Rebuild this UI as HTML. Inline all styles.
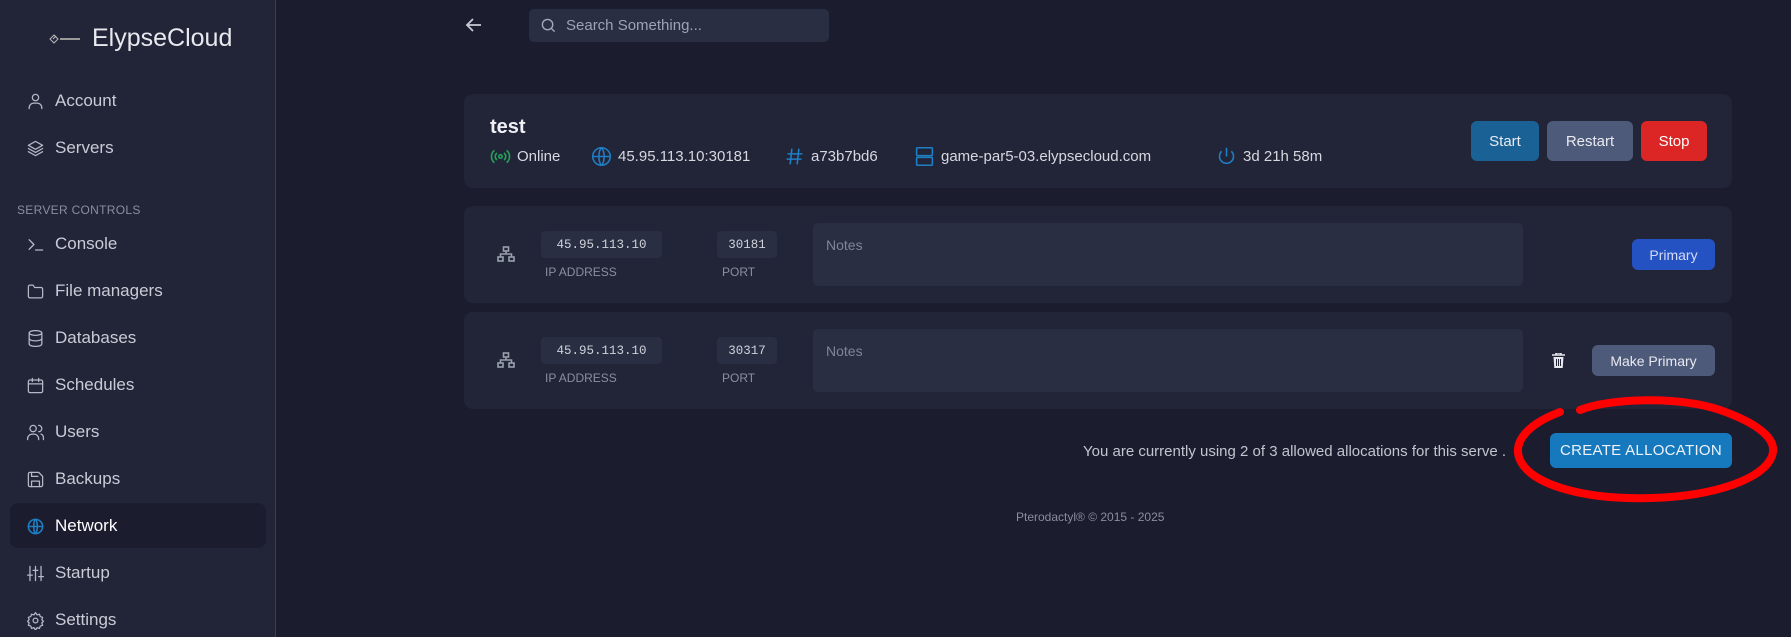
<!DOCTYPE html>
<html><head><meta charset="utf-8"><style>
*{box-sizing:border-box;margin:0;padding:0}
body{width:1791px;height:637px;overflow:hidden;background:#1b1c2e;font-family:"Liberation Sans",sans-serif;color:#e5e7eb;position:relative}
.side{position:absolute;left:0;top:0;width:276px;height:637px;background:#222438;border-right:1px solid #3a3d55}
.logo{position:absolute;left:48px;top:24px;font-size:25px;color:#e8e9ee;display:flex;align-items:center;gap:10px}
.nav{position:absolute;left:26px;font-size:17px;color:#c9ccd6;display:flex;align-items:center;gap:10px;height:24px}
.nav svg{width:19px;height:19px;fill:none;stroke:#b5b9c6;stroke-width:1.6;stroke-linecap:round;stroke-linejoin:round}
.sec{position:absolute;left:17px;top:203px;font-size:12px;color:#8a8ea0;letter-spacing:.3px}
.hl{position:absolute;left:10px;top:503px;width:256px;height:45px;background:#1b1c2e;border-radius:8px}
.card{position:absolute;left:464px;width:1268px;background:#222438;border-radius:9px}
.btn{position:absolute;border-radius:6px;color:#e8eaf0;font-size:15px;display:flex;align-items:center;justify-content:center}
.info{position:absolute;top:146px;font-size:15px;color:#d6d8e0;display:flex;align-items:center;gap:6px}
.info svg{width:21px;height:21px;fill:none;stroke:#1e7fc4;stroke-width:1.8}
.mono{position:absolute;background:#2a2e42;border-radius:4px;font-family:"Liberation Mono",monospace;font-size:12.5px;color:#cfd2da;display:flex;align-items:center;justify-content:center;height:27px}
.lbl{position:absolute;font-size:12px;color:#8a8ea0}
.notes{position:absolute;left:349px;width:710px;height:63px;background:#2a2e42;border-radius:5px;color:#7f8496;font-size:14px;padding:14px 13px}
</style></head><body>
<div class="side">
 <div class="logo"><svg width="34" height="12" viewBox="0 0 34 12"><g stroke="#bbb" fill="none" stroke-width="1"><path d="M2 6l4-4 4 4-4 4z"/><path d="M5 6l3-3"/></g><rect x="12" y="5" width="20" height="2" fill="#999"/></svg>ElypseCloud</div>
 <div class="nav" style="top:89px"><svg viewBox="0 0 24 24"><circle cx="12" cy="7" r="4"/><path d="M4 21v-1a6 6 0 0 1 6-6h4a6 6 0 0 1 6 6v1"/></svg>Account</div>
 <div class="nav" style="top:136px"><svg viewBox="0 0 24 24"><path d="M12 3l9 5-9 5-9-5z"/><path d="M3 12l9 5 9-5"/><path d="M3 16l9 5 9-5"/></svg>Servers</div>
 <div class="sec">SERVER CONTROLS</div>
 <div class="nav" style="top:232px"><svg viewBox="0 0 24 24"><path d="M4 6l6 6-6 6"/><path d="M12 19h9"/></svg>Console</div>
 <div class="nav" style="top:279px"><svg viewBox="0 0 24 24"><path d="M3 6a2 2 0 0 1 2-2h4l2 3h8a2 2 0 0 1 2 2v9a2 2 0 0 1-2 2H5a2 2 0 0 1-2-2z"/></svg>File managers</div>
 <div class="nav" style="top:326px"><svg viewBox="0 0 24 24"><ellipse cx="12" cy="5" rx="8" ry="3"/><path d="M4 5v14c0 1.7 3.6 3 8 3s8-1.3 8-3V5"/><path d="M4 12c0 1.7 3.6 3 8 3s8-1.3 8-3"/></svg>Databases</div>
 <div class="nav" style="top:373px"><svg viewBox="0 0 24 24"><rect x="3" y="5" width="18" height="16" rx="2"/><path d="M8 3v4M16 3v4M3 10h18"/></svg>Schedules</div>
 <div class="nav" style="top:420px"><svg viewBox="0 0 24 24"><circle cx="9" cy="7" r="4"/><path d="M2 21v-1a6 6 0 0 1 6-6h2a6 6 0 0 1 6 6v1"/><path d="M16 3a4 4 0 0 1 0 8M19 14a5 5 0 0 1 3 5v2"/></svg>Users</div>
 <div class="nav" style="top:467px"><svg viewBox="0 0 24 24"><path d="M5 3h11l5 5v11a2 2 0 0 1-2 2H5a2 2 0 0 1-2-2V5a2 2 0 0 1 2-2z"/><path d="M7 21v-7h10v7M7 3v5h8"/></svg>Backups</div>
 <div class="hl"></div>
 <div class="nav" style="top:514px;color:#fff"><svg viewBox="0 0 24 24" style="stroke:#1e7fc4;stroke-width:2"><circle cx="12" cy="12" r="9"/><path d="M3 12h18M12 3c3 3 3 15 0 18M12 3c-3 3-3 15 0 18"/></svg>Network</div>
 <div class="nav" style="top:561px"><svg viewBox="0 0 24 24"><path d="M5 3v18M12 3v18M19 3v18M2 14h6M9 8h6M16 16h6"/></svg>Startup</div>
 <div class="nav" style="top:608px"><svg viewBox="0 0 24 24"><circle cx="12" cy="12" r="3"/><path d="M12 2l2 3 3-1 1 3 3 1-1 3 2 2-2 2 1 3-3 1-1 3-3-1-2 3-2-3-3 1-1-3-3-1 1-3-2-2 2-2-1-3 3-1 1-3 3 1z"/></svg>Settings</div>
</div>

<svg style="position:absolute;left:465px;top:17px" width="18" height="16" viewBox="0 0 18 16"><path d="M16 8H2M8 2L2 8l6 6" stroke="#c8cbd6" stroke-width="1.8" fill="none"/></svg>
<div style="position:absolute;left:529px;top:9px;width:300px;height:33px;background:#2a2e42;border-radius:5px;display:flex;align-items:center;padding-left:12px;gap:10px;color:#9ea2b2;font-size:15px"><svg width="15" height="15" viewBox="0 0 16 16"><circle cx="7" cy="7" r="5.5" stroke="#a4a8b6" stroke-width="1.5" fill="none"/><path d="M11 11l3.5 3.5" stroke="#a4a8b6" stroke-width="1.5"/></svg>Search Something...</div>

<div class="card" style="top:94px;height:94px"></div>
<div style="position:absolute;left:490px;top:116px;font-size:20px;font-weight:bold;color:#eef0f5">test</div>
<div class="info" style="left:490px"><svg viewBox="0 0 24 24" style="stroke:#22a55a"><circle cx="12" cy="12" r="2"/><path d="M8 8a5 5 0 0 0 0 8M16 8a5 5 0 0 1 0 8M5 5a9 9 0 0 0 0 14M19 5a9 9 0 0 1 0 14"/></svg>Online</div>
<div class="info" style="left:591px"><svg viewBox="0 0 24 24"><circle cx="12" cy="12" r="10"/><path d="M2 12h20M12 2c4 4 4 16 0 20M12 2c-4 4-4 16 0 20"/></svg>45.95.113.10:30181</div>
<div class="info" style="left:784px"><svg viewBox="0 0 24 24"><path d="M9 3L7 21M17 3l-2 18M4 9h17M3 15h17"/></svg>a73b7bd6</div>
<div class="info" style="left:914px"><svg viewBox="0 0 24 24"><rect x="3" y="2" width="18" height="9" rx="1"/><rect x="3" y="13" width="18" height="9" rx="1"/><path d="M7 6h.1M7 17h.1"/></svg>game-par5-03.elypsecloud.com</div>
<div class="info" style="left:1216px"><svg viewBox="0 0 24 24"><path d="M12 2v10"/><path d="M6.5 6a8 8 0 1 0 11 0"/></svg>3d 21h 58m</div>
<div class="btn" style="left:1471px;top:121px;width:68px;height:40px;background:#1a6296">Start</div>
<div class="btn" style="left:1547px;top:121px;width:86px;height:40px;background:#4e5a7a">Restart</div>
<div class="btn" style="left:1641px;top:121px;width:66px;height:40px;background:#dc2626;color:#fff">Stop</div>

<div class="card" style="top:206px;height:97px">
 <svg style="position:absolute;left:33px;top:40px" width="18" height="17" viewBox="0 0 18 17"><g fill="none" stroke="#9aa0ae" stroke-width="1.6"><rect x="6.5" y="1" width="5" height="4"/><rect x="1" y="11" width="5" height="4"/><rect x="12" y="11" width="5" height="4"/><path d="M9 5v3M3.5 11V8h11v3"/></g></svg>
 <div class="mono" style="left:77px;top:25px;width:121px">45.95.113.10</div>
 <div class="lbl" style="left:81px;top:59px">IP ADDRESS</div>
 <div class="mono" style="left:253px;top:25px;width:60px">30181</div>
 <div class="lbl" style="left:258px;top:59px">PORT</div>
 <div class="notes" style="top:17px">Notes</div>
 <div class="btn" style="left:1168px;top:33px;width:83px;height:31px;background:#2552c3;font-size:14px;color:#d4dcf5">Primary</div>
</div>
<div class="card" style="top:312px;height:97px">
 <svg style="position:absolute;left:33px;top:40px" width="18" height="17" viewBox="0 0 18 17"><g fill="none" stroke="#9aa0ae" stroke-width="1.6"><rect x="6.5" y="1" width="5" height="4"/><rect x="1" y="11" width="5" height="4"/><rect x="12" y="11" width="5" height="4"/><path d="M9 5v3M3.5 11V8h11v3"/></g></svg>
 <div class="mono" style="left:77px;top:25px;width:121px">45.95.113.10</div>
 <div class="lbl" style="left:81px;top:59px">IP ADDRESS</div>
 <div class="mono" style="left:253px;top:25px;width:60px">30317</div>
 <div class="lbl" style="left:258px;top:59px">PORT</div>
 <div class="notes" style="top:17px">Notes</div>
 <svg style="position:absolute;left:1088px;top:41px" width="13" height="15" viewBox="0 0 13 15"><path d="M0 2h13M4 2V0h5v2" stroke="#e8e8ee" stroke-width="1.6" fill="none"/><path d="M1.5 4h10l-.8 11H2.3z" fill="#e8e8ee"/><path d="M4.5 6v7M6.5 6v7M8.5 6v7" stroke="#222438" stroke-width="1"/></svg>
 <div class="btn" style="left:1128px;top:33px;width:123px;height:31px;background:#4e5a7a;font-size:14px">Make Primary</div>
</div>

<div style="position:absolute;left:1083px;top:443px;font-size:15px;color:#c2c5cf">You are currently using 2 of 3 allowed allocations for this serve .</div>
<div class="btn" style="left:1550px;top:433px;width:182px;height:35px;background:#1679bd;font-size:15px;letter-spacing:.3px;color:#eef3fa">CREATE ALLOCATION</div>
<svg style="position:absolute;left:0;top:0" width="1791" height="637"><path d="M1580 410c30-12 100-14 140 0 40 14 58 30 52 46-8 22-55 40-120 42-65 2-120-12-132-38-8-18 8-36 40-48" stroke="#ff0000" stroke-width="8" fill="none" stroke-linecap="round"/></svg>
<div style="position:absolute;left:1016px;top:510px;font-size:12px;color:#8a8ea0">Pterodactyl® © 2015 - 2025</div>
</body></html>
